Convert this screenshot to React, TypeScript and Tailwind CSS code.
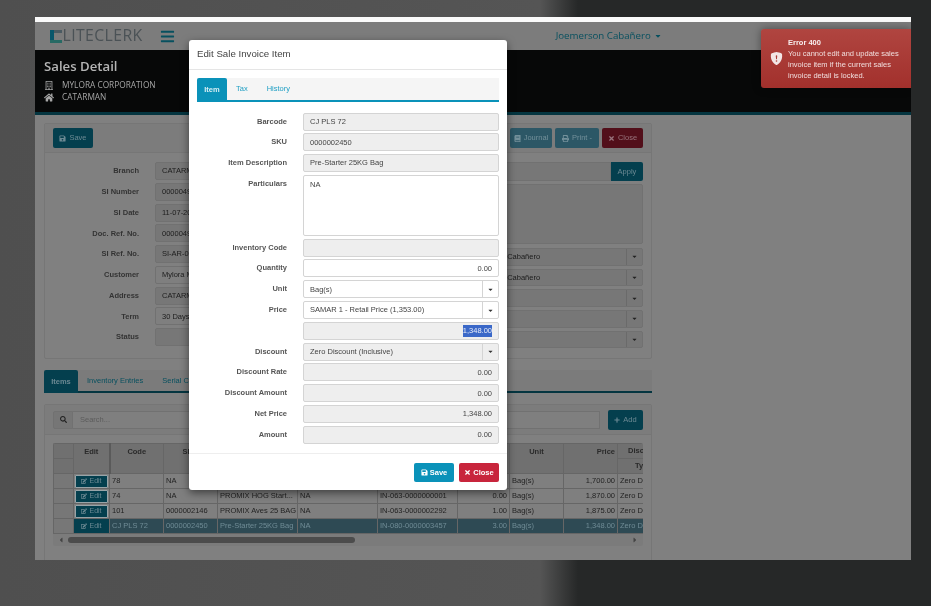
import { FaBars, FaBook, FaCaretDown, FaCaretLeft, FaCaretRight, FaEdit, FaHome, FaPlus, FaPrint, FaRegBuilding, FaSave, FaSearch, FaTimes } from 'react-icons/fa';
import { BsShieldFillExclamation } from 'react-icons/bs';

const leftRows = [
    ['Branch', 'CATARMAN'],
    ['SI Number', '0000049'],
    ['SI Date', '11-07-2019'],
    ['Doc. Ref. No.', '0000049'],
    ['SI Ref. No.', 'SI-AR-0000'],
    ['Customer', 'Mylora Mylora'],
    ['Address', 'CATARMAN'],
    ['Term', '30 Days'],
    ['Status', ''],
];

const tableRows = [
    { code: '78', sku: 'NA', desc: 'PROMIX HOG Grower', part: 'NA', inv: 'IN-063-0000000002', qty: '1.00', price: '1,700.00' },
    { code: '74', sku: 'NA', desc: 'PROMIX HOG Start...', part: 'NA', inv: 'IN-063-0000000001', qty: '0.00', price: '1,870.00' },
    { code: '101', sku: '0000002146', desc: 'PROMIX Aves 25 BAG', part: 'NA', inv: 'IN-063-0000002292', qty: '1.00', price: '1,875.00' },
    { code: 'CJ PLS 72', sku: '0000002450', desc: 'Pre-Starter 25KG Bag', part: 'NA', inv: 'IN-080-0000003457', qty: '3.00', price: '1,348.00', active: true },
];

function Logo() {
    return (
        <svg width="12" height="13" viewBox="0 0 12 13" className="shrink-0">
            <rect x="0" y="0" width="12" height="3" fill="#4a5a62" />
            <rect x="0" y="0" width="4" height="13" fill="#08566b" />
            <rect x="0" y="10" width="12" height="3" fill="#276a64" />
        </svg>
    );
}

function DimButton({ children, className }: { children: React.ReactNode; className: string }) {
    return (
        <div className={`h-[20px] flex items-center justify-center gap-[3px] rounded-[2px] text-[7.5px] ${className}`}>
            {children}
        </div>
    );
}

function DimSelect({ text }: { text: string }) {
    return (
        <div className="h-[17.5px] flex border border-[#717171] rounded-[2px] bg-[#777777] text-[7.5px] text-[#1c1c1c]">
            <div className="flex-1 flex items-center pl-[64px]">{text}</div>
            <div className="w-[16px] flex items-center justify-center border-l border-[#6a6a6a]">
                <FaCaretDown className="text-[7px] text-[#222]" />
            </div>
        </div>
    );
}

function ModalRow({ label, children }: { label: string; children?: React.ReactNode }) {
    return (
        <div className="flex">
            <div className="w-[90px] text-right text-[7.5px] font-bold text-[#555] pt-[4px] leading-[10px]">{label}</div>
            <div className="w-[196px] ml-[16px]">{children}</div>
        </div>
    );
}

function ModalInput({ value = '', right, white, height = 'h-[18px]' }: { value?: string; right?: boolean; white?: boolean; height?: string }) {
    return (
        <div className={`${height} px-[6px] flex border border-[#d4d4d4] rounded-[2px] text-[7.5px] text-[#444] ${white ? 'bg-white items-start pt-[3px]' : 'bg-[#eeeeee] items-center'} ${right ? 'justify-end' : ''}`}>
            {value}
        </div>
    );
}

function ModalSelect({ value, gray }: { value: string; gray?: boolean }) {
    return (
        <div className={`h-[18px] flex border border-[#d4d4d4] rounded-[2px] text-[7.5px] text-[#444] ${gray ? 'bg-[#eeeeee]' : 'bg-white'}`}>
            <div className="flex-1 flex items-center px-[6px]">{value}</div>
            <div className="w-[16px] flex items-center justify-center border-l border-[#d4d4d4]">
                <FaCaretDown className="text-[7px] text-[#333]" />
            </div>
        </div>
    );
}

export default function App() {
    return (
        <div className="relative w-[931px] h-[606px] overflow-hidden pt-[17px] pl-[35px] bg-[linear-gradient(90deg,#4f4f4f_0,#555555_540px,#262828_578px)] [font-family:'Liberation_Sans',Arial,sans-serif] blur-[0.35px]">
            <div className="relative w-[876px] h-[543px] overflow-hidden bg-[#808080]">
                {/* Barra blanca superior */}
                <div className="h-[5px] bg-[#fafafa]" />

                {/* Header */}
                <div className="h-[28px] bg-[#7c7c7c] flex items-center pl-[15px]">
                    <Logo />
                    <span className="ml-[0.5px] text-[15.8px] tracking-[0.4px] text-[#4b5256] [font-family:'Open_Sans',sans-serif]">LITECLERK</span>
                    <FaBars className="ml-[17px] text-[15px] text-[#07505f]" />
                    <div className="ml-[381px] flex items-center gap-[3px] text-[9.7px] text-[#07505f] [font-family:'Open_Sans',sans-serif]">
                        Joemerson Cabañero <FaCaretDown className="text-[8px]" />
                    </div>
                </div>

                {/* Banner */}
                <div className="h-[62px] bg-[#070808] pl-[9px] pt-[6px] text-[#a6a6a6] [font-family:'Open_Sans',sans-serif]">
                    <div className="text-[13.2px] font-semibold leading-[20px] text-[#b4b4b4]">Sales Detail</div>
                    <div className="mt-[3px] flex items-center gap-[8px] text-[8.3px] leading-[12px]">
                        <FaRegBuilding className="w-[10px] text-[9px]" /> MYLORA CORPORATION
                    </div>
                    <div className="flex items-center gap-[8px] text-[8.3px] leading-[12px]">
                        <FaHome className="w-[10px] text-[9px]" /> CATARMAN
                    </div>
                </div>
                <div className="h-[3px] bg-[#043540]" />

                <div className="px-[9px] pt-[8px] w-[626px]">
                    {/* Panel de detalle */}
                    <div className="h-[236px] border border-[#767676] rounded-[2px]">
                        <div className="h-[29px] bg-[#7c7c7c] border-b border-[#767676] flex items-center px-[8px]">
                            <DimButton className="w-[40px] bg-[#043f4e] text-[#6c8993]">
                                <FaSave className="text-[7px]" /> Save
                            </DimButton>
                            <div className="ml-auto flex gap-[3px]">
                                <DimButton className="w-[42px] bg-[#2c5766] text-[#73909a]">
                                    <FaBook className="text-[7px]" /> Journal
                                </DimButton>
                                <DimButton className="w-[44px] bg-[#2c5766] text-[#73909a]">
                                    <FaPrint className="text-[7px]" /> Print -
                                </DimButton>
                                <DimButton className="w-[41px] bg-[#520f1a] text-[#98747c]">
                                    <FaTimes className="text-[7px]" /> Close
                                </DimButton>
                            </div>
                        </div>
                        <div className="flex px-[8px] pt-[9px]">
                            <div className="flex flex-col gap-[2.75px] w-[290px]">
                                {leftRows.map(([label, value]) => (
                                    <div key={label} className="flex items-center">
                                        <div className="w-[86px] text-right text-[7.5px] font-bold text-[#333]">{label}</div>
                                        <div className={`ml-[16px] flex-1 h-[18px] flex items-center px-[6px] border border-[#717171] rounded-[2px] text-[7.5px] text-[#1c1c1c] ${label === 'Customer' || label === 'Term' ? 'bg-[#7f7f7f]' : 'bg-[#777777]'}`}>
                                            {value}
                                        </div>
                                    </div>
                                ))}
                            </div>
                            <div className="ml-[60px] w-[240px]">
                                <div className="flex h-[19px]">
                                    <div className="flex-1 border border-[#717171] bg-[#777777] rounded-l-[2px]" />
                                    <div className="w-[32px] bg-[#043f4e] rounded-r-[2px] flex items-center justify-center text-[7.5px] text-[#6c8993]">Apply</div>
                                </div>
                                <div className="mt-[3px] h-[60px] border border-[#717171] bg-[#777777] rounded-[2px]" />
                                <div className="mt-[4px] flex flex-col gap-[3.2px]">
                                    <DimSelect text="Joemerson Cabañero" />
                                    <DimSelect text="Joemerson Cabañero" />
                                    <DimSelect text="" />
                                    <DimSelect text="" />
                                    <DimSelect text="" />
                                </div>
                            </div>
                        </div>
                    </div>

                    {/* Tabs */}
                    <div className="mt-[11px] h-[23px] bg-[#7b7b7b] border-b-2 border-[#043540] flex text-[7.5px]">
                        <div className="w-[34px] -mb-[2px] rounded-t-[2px] bg-[#043f4e] text-[#6c8993] font-bold flex items-center justify-center">Items</div>
                        <div className="ml-[9px] flex items-center text-[#07505f]">Inventory Entries</div>
                        <div className="ml-[19px] flex items-center text-[#07505f]">Serial Control</div>
                    </div>

                    {/* Panel de items */}
                    <div className="mt-[11px] h-[160px] border border-[#767676] rounded-[2px]">
                        <div className="h-[30px] bg-[#7c7c7c] border-b border-[#767676] flex items-center px-[8px]">
                            <div className="w-[20px] h-[18px] flex items-center justify-center bg-[#767676] border border-[#717171] rounded-l-[2px]">
                                <FaSearch className="text-[7px] text-[#222]" />
                            </div>
                            <div className="flex-1 h-[18px] border-y border-r border-[#717171] bg-[#7f7f7f] flex items-center px-[7px] text-[7.5px] text-[#5c5c5c]">Search...</div>
                            <DimButton className="ml-[8px] w-[35px] bg-[#043f4e] text-[#6c8993]">
                                <FaPlus className="text-[6px]" /> Add
                            </DimButton>
                        </div>
                        <div className="mt-[8px] mx-[8px] w-[590px] rounded-[2px] overflow-hidden">
                            <table className="table-fixed w-[644px] border-collapse text-[7.5px] text-[#222]">
                                <colgroup>
                                    <col className="w-[20px]" />
                                    <col className="w-[36px]" />
                                    <col className="w-[54px]" />
                                    <col className="w-[54px]" />
                                    <col className="w-[80px]" />
                                    <col className="w-[80px]" />
                                    <col className="w-[80px]" />
                                    <col className="w-[52px]" />
                                    <col className="w-[54px]" />
                                    <col className="w-[54px]" />
                                    <col className="w-[80px]" />
                                </colgroup>
                                <thead className="bg-[#707070] font-bold text-[#2a2a2a]">
                                    <tr className="h-[15px]">
                                        <th className="border border-[#666]"></th>
                                        <th rowSpan={2} className="border border-[#666] border-r-2 border-r-[#5a5a5a] align-top pt-[2px]">Edit</th>
                                        <th rowSpan={2} className="border border-[#666] align-top pt-[2px]">Code</th>
                                        <th rowSpan={2} className="border border-[#666] align-top pt-[2px]">SKU</th>
                                        <th rowSpan={2} className="border border-[#666] align-top pt-[2px]">Item Description</th>
                                        <th rowSpan={2} className="border border-[#666] align-top pt-[2px]">Particulars</th>
                                        <th rowSpan={2} className="border border-[#666] align-top pt-[2px]">Inventory Code</th>
                                        <th rowSpan={2} className="border border-[#666] align-top pt-[2px] text-right pr-[2px]">Quantity</th>
                                        <th rowSpan={2} className="border border-[#666] align-top pt-[2px]">Unit</th>
                                        <th rowSpan={2} className="border border-[#666] align-top pt-[2px] text-right pr-[2px]">Price</th>
                                        <th className="border border-[#666] text-left pl-[10px]">Discount</th>
                                    </tr>
                                    <tr className="h-[15px]">
                                        <th className="border border-[#666]"></th>
                                        <th className="border border-[#666] text-left pl-[17px]">Type</th>
                                    </tr>
                                </thead>
                                <tbody>
                                    {tableRows.map((row) => {
                                        const cell = `border border-[#666] px-[2px] whitespace-nowrap overflow-hidden ${row.active ? 'bg-[#2e4a54] text-[#6f8b95]' : 'bg-[#7f7f7f]'}`;
                                        return (
                                            <tr key={row.code} className="h-[15px]">
                                                <td className="border border-[#666] bg-[#777777]"></td>
                                                <td className={`border border-[#666] p-0 ${row.active ? 'bg-[#043f4e]' : 'bg-[#7f7f7f]'}`}>
                                                    <div className={`mx-[1px] h-[13px] bg-[#043f4e] text-[#6c8993] text-[7px] flex items-center justify-center gap-[2px] ${row.active ? '' : 'border border-[#98a4a8] rounded-[1px]'}`}>
                                                        <FaEdit className="text-[6px]" /> Edit
                                                    </div>
                                                </td>
                                                <td className={cell}>{row.code}</td>
                                                <td className={cell}>{row.sku}</td>
                                                <td className={cell}>{row.desc}</td>
                                                <td className={cell}>{row.part}</td>
                                                <td className={cell}>{row.inv}</td>
                                                <td className={`${cell} text-right`}>{row.qty}</td>
                                                <td className={cell}>Bag(s)</td>
                                                <td className={`${cell} text-right`}>{row.price}</td>
                                                <td className={cell}>Zero Discount</td>
                                            </tr>
                                        );
                                    })}
                                </tbody>
                            </table>
                            <div className="h-[12px] bg-[#7b7b7b] flex items-center">
                                <FaCaretLeft className="ml-[4px] text-[8px] text-[#444]" />
                                <div className="ml-[3px] w-[287px] h-[6px] rounded-full bg-[#4c4c4c]" />
                                <FaCaretRight className="ml-auto mr-[4px] text-[8px] text-[#444]" />
                            </div>
                        </div>
                    </div>
                </div>

                {/* Modal */}
                <div className="absolute left-[154px] top-[22.5px] w-[318px] h-[450px] bg-white rounded-[3px] shadow-[0_3px_9px_rgba(0,0,0,0.5)]">
                    <div className="h-[30px] border-b border-[#e5e5e5] flex items-center pl-[8px] text-[9.7px] text-[#444]">Edit Sale Invoice Item</div>
                    <div className="px-[8px] pt-[8px]">
                        <div className="h-[24px] bg-[#f5f5f5] border-b-2 border-[#0a92b9] flex text-[7.5px]">
                            <div className="w-[30px] -mb-[2px] rounded-t-[2px] bg-[#0a92b9] text-[#d8eef4] font-bold flex items-center justify-center">Item</div>
                            <div className="ml-[9px] flex items-center text-[#1f9fc4]">Tax</div>
                            <div className="ml-[19px] flex items-center text-[#1f9fc4]">History</div>
                        </div>
                        <div className="mt-[11px] flex flex-col gap-[2.8px]">
                            <ModalRow label="Barcode"><ModalInput value="CJ PLS 72" /></ModalRow>
                            <ModalRow label="SKU"><ModalInput value="0000002450" /></ModalRow>
                            <ModalRow label="Item Description"><ModalInput value="Pre-Starter 25KG Bag" /></ModalRow>
                            <ModalRow label="Particulars"><ModalInput value="NA" white height="h-[61px]" /></ModalRow>
                            <ModalRow label="Inventory Code"><ModalInput /></ModalRow>
                            <ModalRow label="Quantity">
                                <div className="h-[18px] px-[6px] flex items-center justify-end border border-[#d4d4d4] rounded-[2px] bg-white text-[7.5px] text-[#444]">0.00</div>
                            </ModalRow>
                            <ModalRow label="Unit"><ModalSelect value="Bag(s)" /></ModalRow>
                            <ModalRow label="Price"><ModalSelect value="SAMAR 1 - Retail Price (1,353.00)" /></ModalRow>
                            <ModalRow label="">
                                <div className="h-[18px] px-[6px] flex items-center justify-end border border-[#d4d4d4] rounded-[2px] bg-[#eeeeee] text-[7.5px]">
                                    <span className="bg-[#3a68c8] text-[#e8ecf8]">1,348.00</span>
                                </div>
                            </ModalRow>
                            <ModalRow label="Discount"><ModalSelect value="Zero Discount (Inclusive)" gray /></ModalRow>
                            <ModalRow label="Discount Rate"><ModalInput value="0.00" right /></ModalRow>
                            <ModalRow label="Discount Amount"><ModalInput value="0.00" right /></ModalRow>
                            <ModalRow label="Net Price"><ModalInput value="1,348.00" right /></ModalRow>
                            <ModalRow label="Amount"><ModalInput value="0.00" right /></ModalRow>
                        </div>
                    </div>
                    <div className="mt-[9.5px] border-t border-[#eeeeee] pt-[8.5px] pr-[8px] flex justify-end gap-[5px]">
                        <div className="w-[40px] h-[19px] rounded-[2px] bg-[#0a92b9] text-white font-bold text-[7.5px] flex items-center justify-center gap-[2px]">
                            <FaSave className="text-[7px]" /> Save
                        </div>
                        <div className="w-[40px] h-[19px] rounded-[2px] bg-[#c8253c] text-white font-bold text-[7.5px] flex items-center justify-center gap-[2px]">
                            <FaTimes className="text-[7px]" /> Close
                        </div>
                    </div>
                </div>

                {/* Toast de error */}
                <div className="absolute left-[726px] top-[12px] w-[150px] h-[59px] rounded-l-[3px] bg-[linear-gradient(180deg,#b04540,#a2302c)] shadow-[0_0_8px_rgba(0,0,0,0.4)] flex items-center text-[#f0dcdc] text-[7.5px] leading-[11px]">
                    <BsShieldFillExclamation className="ml-[9px] w-[13px] h-[15px] shrink-0 text-[#f2e6e6]" />
                    <div className="ml-[5px]">
                        <div className="font-bold text-[#f8eeee]">Error 400</div>
                        <div>You cannot edit and update sales invoice item if the current sales invoice detail is locked.</div>
                    </div>
                </div>
            </div>
        </div>
    );
}
